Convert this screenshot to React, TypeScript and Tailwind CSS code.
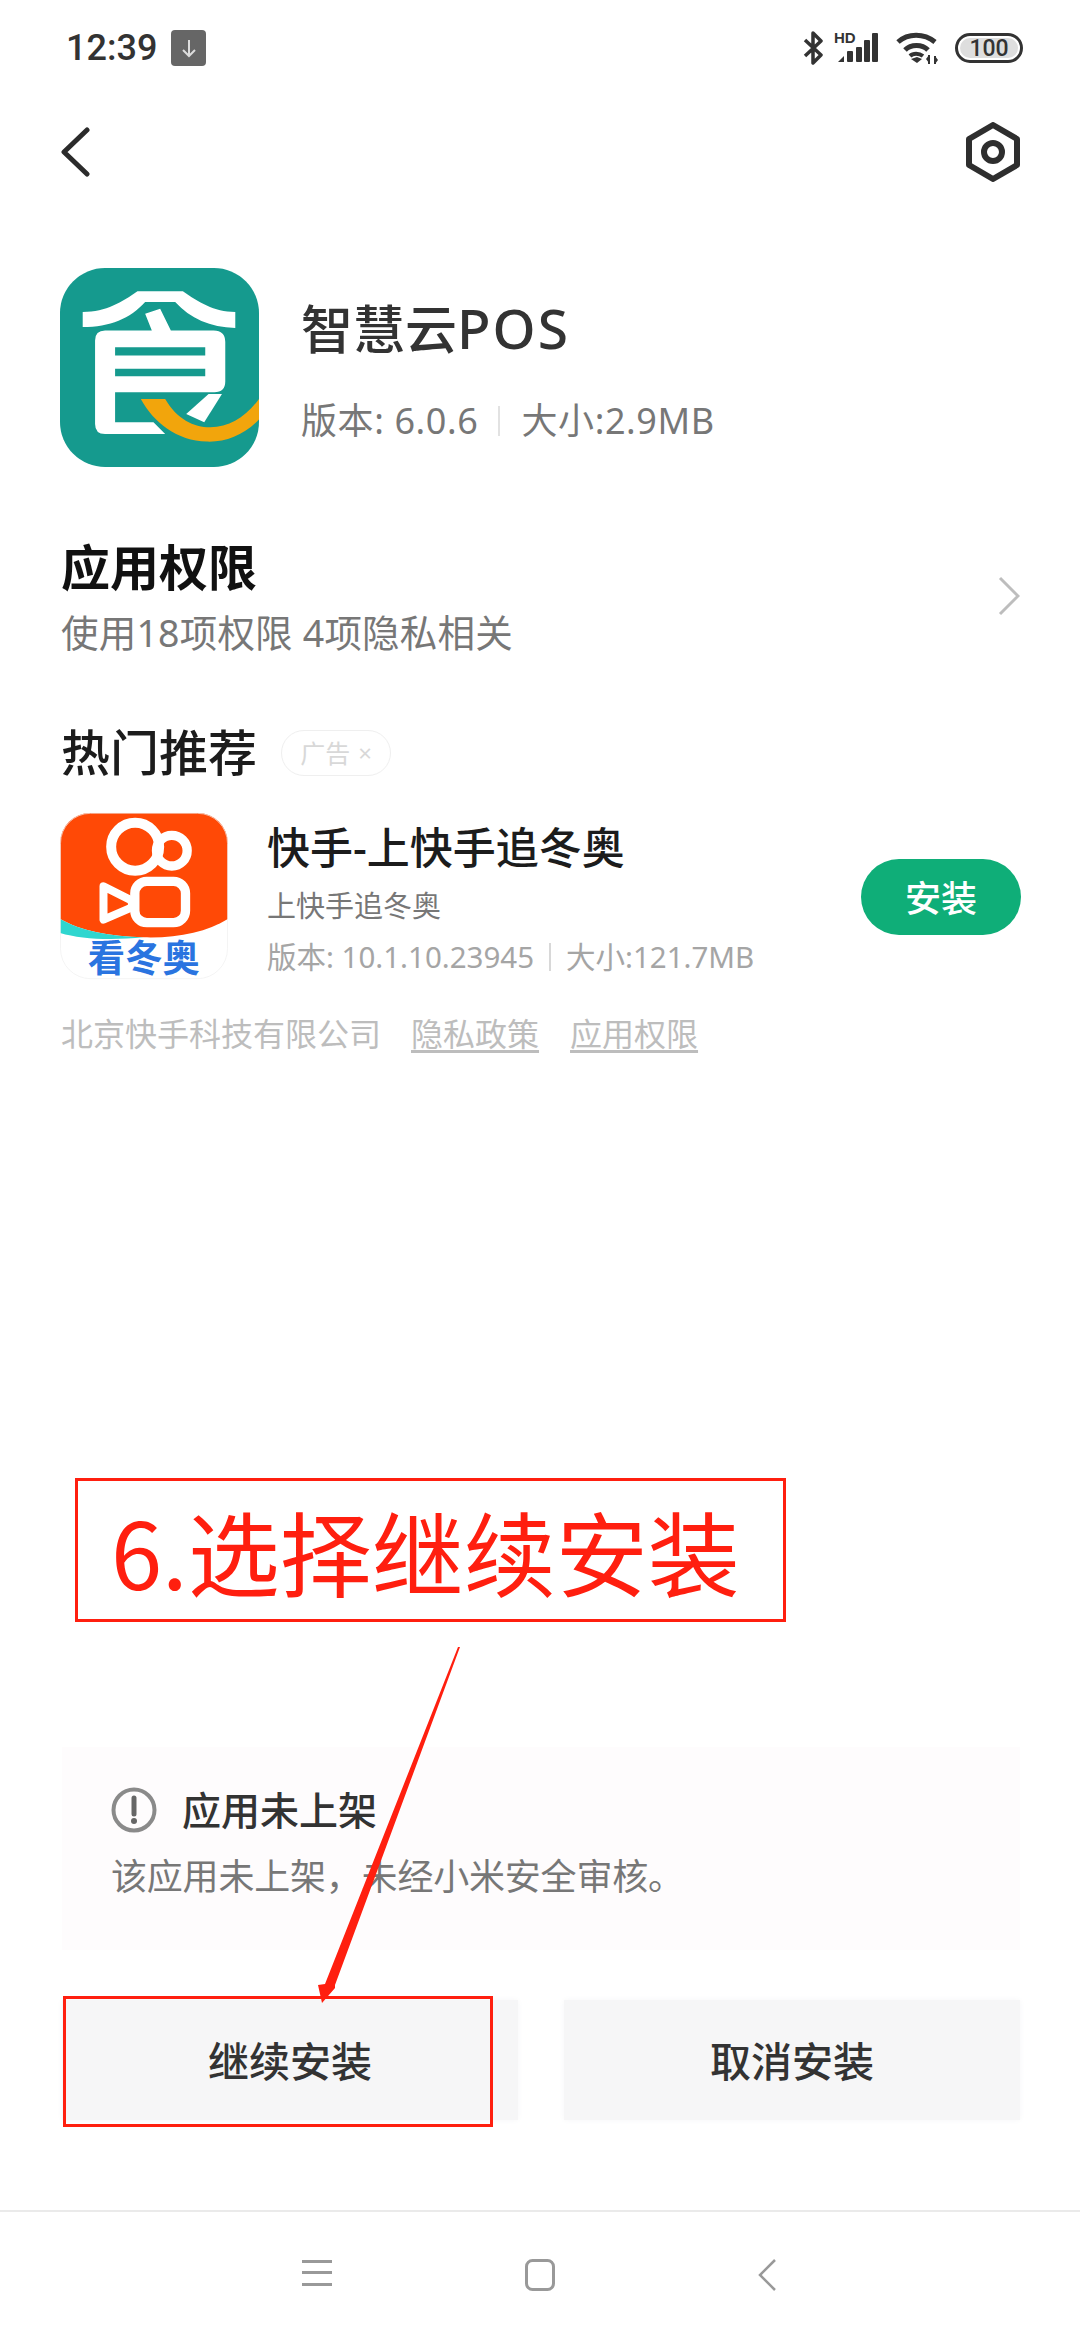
import React from "react";

const fontStack = "font-['Noto_Sans','Noto_Sans_CJK_SC',sans-serif]";

function Bluetooth() {
  return (
    <svg width="21" height="34" viewBox="0 0 21 34" fill="none" stroke="#333" strokeWidth="3.5" strokeLinejoin="round">
      <path d="M2 9 L18 24 L10 32 V2 L18 10 L2 25" />
    </svg>
  );
}

function Signal() {
  return (
    <div className="relative w-[42px] h-[32px]">
      <span className="absolute left-[-3px] top-[-2px] text-[15px] leading-[15px] font-bold text-[#333] font-['Liberation_Sans',sans-serif]">HD</span>
      <svg className="absolute inset-0" width="42" height="32" viewBox="0 0 42 32" fill="#333">
        <path d="M1 30 L7 24 V30 Z" />
        <rect x="10" y="19" width="6" height="11" rx="1" />
        <rect x="19" y="15" width="6" height="15" rx="1" />
        <rect x="27" y="8" width="6" height="22" rx="1" />
        <rect x="35" y="1" width="6" height="29" rx="1" />
      </svg>
    </div>
  );
}

function Wifi() {
  return (
    <svg width="42" height="32" viewBox="0 0 42 32" fill="none" stroke="#333" strokeWidth="5">
      <path d="M2 10 C12 1 28 1 39 10" />
      <path d="M9 18 C15 12 26 12 32 18" />
      <path d="M14 24 C17 21 23 21 27 24" strokeWidth="4" />
      <path d="M15 27 L21 25 L26 27 L21 31 Z" fill="#333" stroke="none" />
      <path d="M33 23 V32 M39 24 V32" strokeWidth="2" />
      <path d="M30 27 L33 23 L33 31 Z M42 28 L39 32 L39 24 Z" fill="#333" stroke="none" />
    </svg>
  );
}

function Battery() {
  return (
    <div className="w-[68px] h-[30px] rounded-full border-[3px] border-[#333] p-[2px] flex">
      <div className="flex-1 rounded-full bg-[#dedede] flex items-center justify-center text-[23px] leading-none font-medium text-[#333] font-['Roboto',sans-serif]">100</div>
    </div>
  );
}

function AppLogo() {
  return (
    <svg width="199" height="199" viewBox="30 28 596 596" className="shrink-0">
      <defs>
        <clipPath id="logoClip">
          <rect x="30" y="28" width="596" height="596" rx="135" />
        </clipPath>
      </defs>
      <g clipPath="url(#logoClip)">
        <rect x="30" y="28" width="596" height="596" fill="#159a8e" />
        <path d="M98 160 C170 160 215 130 262 98 L398 98 C445 130 490 160 555 160 L555 208 C480 205 420 180 375 130 L285 130 C240 180 180 205 98 205 Z" fill="#fff" />
        <path fillRule="evenodd" d="M135 245 Q135 215 165 215 L305 215 L285 165 L330 150 L362 215 L490 215 Q525 215 525 250 L525 368 Q525 400 492 400 L195 400 L195 490 L310 490 L345 525 L165 525 Q135 525 135 495 Z M195 265 V290 H465 V265 Z M195 330 V352 H465 V330 Z" fill="#fff" />
        <path d="M408 465 L475 405 L515 405 L462 490 Z" fill="#fff" />
        <path d="M272 420 L345 420 C380 480 430 505 480 505 C540 505 590 470 630 415 L630 478 C585 525 530 550 470 548 C380 545 310 490 272 420 Z" fill="#f2a50c" />
      </g>
    </svg>
  );
}

function KuaishouLogo() {
  return (
    <svg width="168" height="166" viewBox="30 42 503 498" className="shrink-0 overflow-visible">
      <defs>
        <clipPath id="ksClip">
          <rect x="30" y="42" width="503" height="498" rx="90" />
        </clipPath>
      </defs>
      <g clipPath="url(#ksClip)">
        <rect x="30" y="42" width="503" height="498" fill="#fff" />
        <path d="M30 42 H533 V360 C470 400 380 418 280 415 C180 412 90 395 30 360 Z" fill="#ff4906" />
        <path d="M30 360 C90 395 180 412 280 415 C180 425 90 420 30 402 Z" fill="#2fd6cf" />
        <circle cx="255" cy="143" r="72" fill="none" stroke="#fff" strokeWidth="30" />
        <circle cx="365" cy="155" r="46" fill="none" stroke="#fff" strokeWidth="28" />
        <rect x="254" y="247" width="152" height="124" rx="36" fill="none" stroke="#fff" strokeWidth="28" />
        <path d="M160 262 L245 305 V325 L160 362 Z" fill="none" stroke="#fff" strokeWidth="24" strokeLinejoin="round" />
      </g>
      <text x="281" y="520" textAnchor="middle" fontSize="112" fontWeight="700" fill="#2a74e0" fontFamily="'Noto Sans CJK SC',sans-serif">看冬奥</text>
      <rect x="31" y="43" width="501" height="496" rx="90" fill="none" stroke="#eee" strokeWidth="2" />
    </svg>
  );
}

export default function App() {
  return (
    <div className={`relative w-[1080px] h-[2340px] bg-white flex flex-col overflow-hidden ${fontStack}`}>
      {/* status bar */}
      <div className="h-[96px] pl-[66px] pr-[57px] flex items-center justify-between">
        <div className="flex items-center gap-[14px]">
          <span className="text-[36px] leading-none font-medium text-[#333] font-['Roboto',sans-serif]">12:39</span>
          <div className="w-[35px] h-[36px] rounded-[4px] bg-[#666] flex items-center justify-center">
            <svg width="20" height="22" viewBox="0 0 20 22" fill="none" stroke="#ddd" strokeWidth="2">
              <path d="M10 3 V19 M4 13 L10 19 L16 13" />
            </svg>
          </div>
        </div>
        <div className="flex items-center">
          <Bluetooth />
          <div className="ml-[13px]"><Signal /></div>
          <div className="ml-[17px]"><Wifi /></div>
          <div className="ml-[17px]"><Battery /></div>
        </div>
      </div>

      {/* header */}
      <div className="h-[112px] pl-[60px] pr-[60px] flex items-center justify-between">
        <svg width="30" height="50" viewBox="0 0 30 50" fill="none" stroke="#2b2b2b" strokeWidth="5" strokeLinecap="round" strokeLinejoin="round">
          <path d="M27 3 L4 25 L27 47" />
        </svg>
        <svg width="54" height="60" viewBox="0 0 54 60" fill="none" stroke="#2e2e2e" strokeWidth="6" strokeLinejoin="round">
          <path d="M27 3 L51 17 V43 L27 57 L3 43 V17 Z" />
          <circle cx="27" cy="30" r="9" />
        </svg>
      </div>

      {/* app summary */}
      <div className="mt-[60px] ml-[60px] flex">
        <AppLogo />
        <div className="ml-[42px] pt-[30px]">
          <div className="text-[52px] leading-[60px] font-medium text-[#333]">
            智慧云<span className="text-[55px] tracking-[2px]">POS</span>
          </div>
          <div className="mt-[40px] h-[44px] flex items-center text-[36px] leading-[44px] tracking-[0.6px] text-[#777]">
            <span>版本: 6.0.6</span>
            <span className="ml-[20px] w-[2px] h-[30px] bg-[#e2e2e2]" />
            <span className="ml-[21px]">大小:2.9MB</span>
          </div>
        </div>
      </div>

      {/* permissions */}
      <div className="mt-[70px] pl-[61px] pr-[60px] flex items-center justify-between">
        <div>
          <div className="text-[49px] leading-[60px] font-bold text-[#111]">应用权限</div>
          <div className="mt-[14px] text-[37.5px] leading-[44px] tracking-[0.2px] text-[#777]">使用18项权限 4项隐私相关</div>
        </div>
        <svg width="22" height="40" viewBox="0 0 22 40" fill="none" stroke="#bdbdbd" strokeWidth="3">
          <path d="M2 2 L20 20 L2 38" />
        </svg>
      </div>

      {/* recommendations */}
      <div className="mt-[67px] pl-[61px] flex items-center">
        <div className="text-[49px] leading-[60px] font-medium text-[#1c1c1c]">热门推荐</div>
        <div className="ml-[24px] mt-[2px] w-[110px] h-[46px] rounded-full border border-[#efefef] flex items-center justify-center gap-[8px] text-[25px] leading-none text-[#d8d8d8]">
          <span>广告</span>
          <span className="text-[24px]">×</span>
        </div>
      </div>
      <div className="mt-[31px] pl-[60px] pr-[59px] flex items-center">
        <KuaishouLogo />
        <div className="ml-[39px] flex-1 pt-[10px] h-[166px]">
          <div className="text-[43px] leading-[50px] font-medium text-[#1c1c1c]">快手-上快手追冬奥</div>
          <div className="mt-[13px] text-[29px] leading-[40px] text-[#777]">上快手追冬奥</div>
          <div className="mt-[11px] h-[40px] flex items-center text-[29.5px] leading-[40px] text-[#a5a5a5]">
            <span>版本: 10.1.10.23945</span>
            <span className="ml-[15px] w-[2px] h-[28px] bg-[#d8d8d8]" />
            <span className="ml-[15px]">大小:121.7MB</span>
          </div>
        </div>
        <div className="mt-[2px] pt-[4px] w-[160px] h-[76px] rounded-full bg-[#0fae78] flex items-center justify-center text-[36px] font-medium text-white">安装</div>
      </div>
      <div className="mt-[33px] pl-[61px] flex items-center text-[32px] leading-[44px] text-[#bdbdbd]">
        <span>北京快手科技有限公司</span>
        <span className="ml-[30px] underline underline-offset-[4px]">隐私政策</span>
        <span className="ml-[31px] underline underline-offset-[4px]">应用权限</span>
      </div>

      {/* warning */}
      <div className="mt-auto ml-[62px] mr-[60px] h-[203px] bg-[#fefcfd] pt-[38px] pl-[49px]">
        <div className="flex items-center h-[50px]">
          <svg width="46" height="46" viewBox="0 0 46 46" fill="none">
            <circle cx="23" cy="23" r="20.5" stroke="#8a8a8a" strokeWidth="4" />
            <path d="M23 11 V27" stroke="#666" strokeWidth="5" strokeLinecap="round" />
            <circle cx="23" cy="34" r="3" fill="#666" />
          </svg>
          <span className="ml-[25px] text-[39px] leading-[50px] font-medium text-[#333]">应用未上架</span>
        </div>
        <div className="mt-[20px] text-[36px] leading-[44px] tracking-[-0.2px] text-[#777]">该应用未上架，未经小米安全审核。</div>
      </div>

      {/* action buttons */}
      <div className="mt-[50px] pl-[62px] pr-[60px] flex gap-[46px]">
        <div className="flex-1 h-[120px] pt-[3px] bg-[#f6f6f7] shadow-[0_0_6px_#f6f6f7] flex items-center justify-center text-[41px] font-medium text-[#333]">继续安装</div>
        <div className="flex-1 h-[120px] pt-[3px] bg-[#f6f6f7] shadow-[0_0_6px_#f6f6f7] flex items-center justify-center text-[41px] font-medium text-[#333]">取消安装</div>
      </div>

      {/* navigation bar */}
      <div className="mt-[90px] h-[130px] border-t-2 border-[#eaeaea] flex items-start pt-[47px] pl-[302px]">
        <svg width="30" height="28" viewBox="0 0 30 28" fill="#999">
          <rect y="1" width="30" height="3" />
          <rect y="12" width="30" height="3" />
          <rect y="24" width="30" height="3" />
        </svg>
        <svg className="ml-[193px]" width="30" height="32" viewBox="0 0 30 32" fill="none" stroke="#999" strokeWidth="3">
          <rect x="1.5" y="1.5" width="27" height="29" rx="6" />
        </svg>
        <svg className="ml-[203px]" width="18" height="32" viewBox="0 0 18 32" fill="none" stroke="#999" strokeWidth="2.5">
          <path d="M17 1 L2 16 L17 31" />
        </svg>
      </div>

      {/* red annotations over the page */}
      <div className="absolute left-[75px] top-[1478px] w-[711px] h-[144px] border-[3px] border-[#ff1f0f] flex items-center pl-[33px] text-[92px] leading-none text-[#ff1f0f] font-['Noto_Sans_CJK_SC',sans-serif]">
        6.选择继续安装
      </div>
      <div className="absolute left-[63px] top-[1996px] w-[430px] h-[131px] border-[3px] border-[#ff1f0f]" />
      <svg className="absolute inset-0 pointer-events-none" width="1080" height="2340" viewBox="0 0 1080 2340">
        <path d="M460 1647 L335 1985 L335 1988 L322 2003 L318 1985 L325 1984 L458 1647 Z" fill="#ff1f0f" />
      </svg>
    </div>
  );
}
